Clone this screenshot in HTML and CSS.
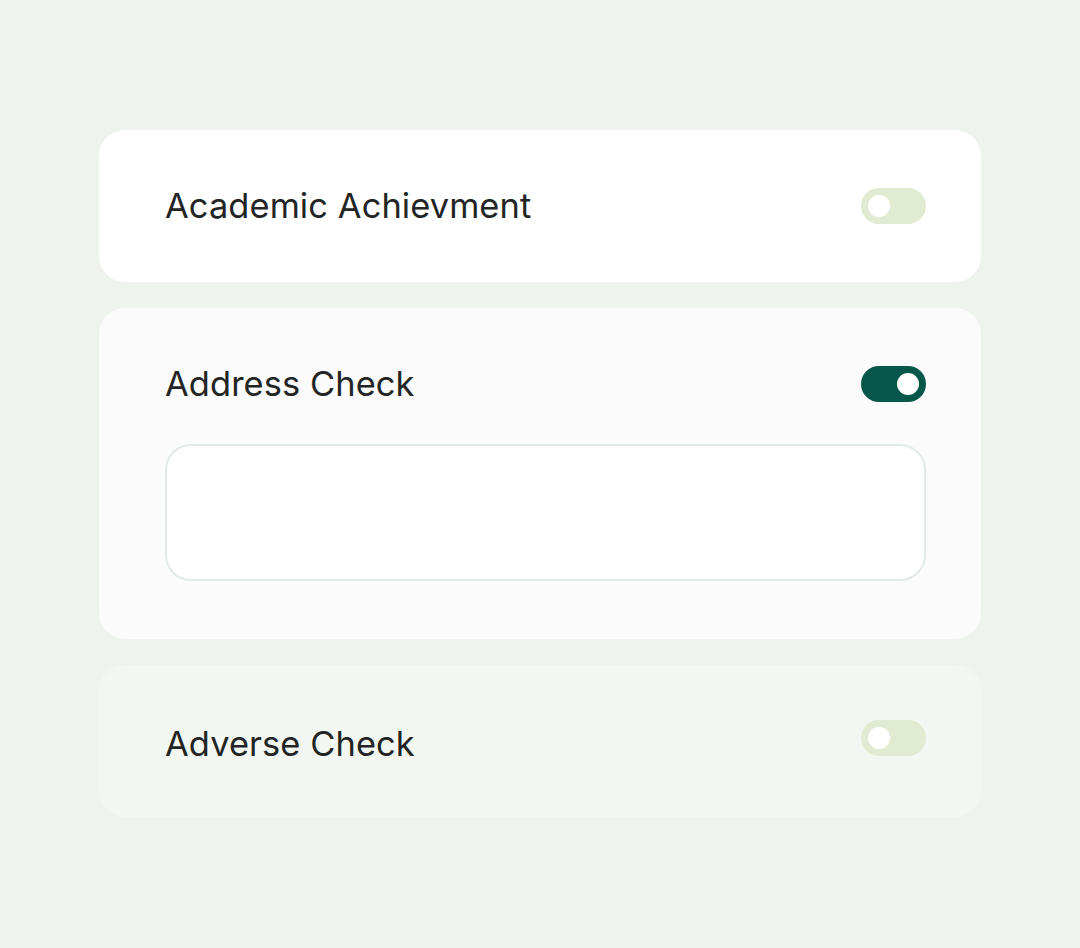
FILE: index.html
```html
<!DOCTYPE html>
<html lang="en">
<head>
  <meta charset="UTF-8">
  <title>Checks</title>
  <link rel="stylesheet" href="styles.css">
</head>
<body>
  <div class="list">
    <div class="card card-white">
      <div class="row">
        <span class="label">Academic Achievment</span>
        <label class="toggle"><input type="checkbox"><span class="track"></span></label>
      </div>
    </div>

    <div class="card card-soft">
      <div class="row">
        <span class="label">Address Check</span>
        <label class="toggle"><input type="checkbox" checked><span class="track"></span></label>
      </div>
      <textarea class="note"></textarea>
    </div>

    <div class="card card-tint">
      <div class="row">
        <span class="label">Adverse Check</span>
        <label class="toggle"><input type="checkbox"><span class="track"></span></label>
      </div>
    </div>
  </div>
</body>
</html>
```

FILE: styles.css
```css
body {
  margin: 0;
  background-color: #eef3ed;
  font-family: Inter, "Noto Sans", sans-serif;
  color: #222524;
}
.list {
  width: 882px;
  margin: 130px 0 0 99px;
  display: flex;
  flex-direction: column;
  gap: 26px;
}
.card {
  border-radius: 26px;
  padding: 58px 55px 58px 66px;
  display: flex;
  flex-direction: column;
  gap: 42px;
}
.card-white {
  background-color: #ffffff;
}
.card-soft {
  background-color: #fafbfa;
}
.card-tint {
  background-color: #f3f7f2;
  padding-top: 55px;
  padding-bottom: 61px;
}
.card-tint .label {
  padding-top: 11px;
}
.row {
  height: 36px;
  display: flex;
  align-items: center;
  justify-content: space-between;
}
.label {
  font-size: 34.4px;
  line-height: 36px;
  letter-spacing: 0.1px;
}
.toggle {
  position: relative;
  width: 65px;
  height: 36px;
  cursor: pointer;
}
.toggle input {
  display: none;
}
.track {
  display: block;
  width: 65px;
  height: 36px;
  border-radius: 18px;
  background-color: #e0ebd2;
}
.track::after {
  content: "";
  position: absolute;
  top: 7px;
  left: 7px;
  width: 22px;
  height: 22px;
  border-radius: 50%;
  background-color: #fff;
}
.toggle input:checked + .track {
  background-color: #06574a;
}
.toggle input:checked + .track::after {
  left: 36px;
}
.note {
  display: block;
  box-sizing: border-box;
  width: 761px;
  height: 137px;
  margin: 0;
  border: 2px solid #e2ebe8;
  border-radius: 26px;
  background-color: #fff;
  resize: none;
  outline: none;
}
```
